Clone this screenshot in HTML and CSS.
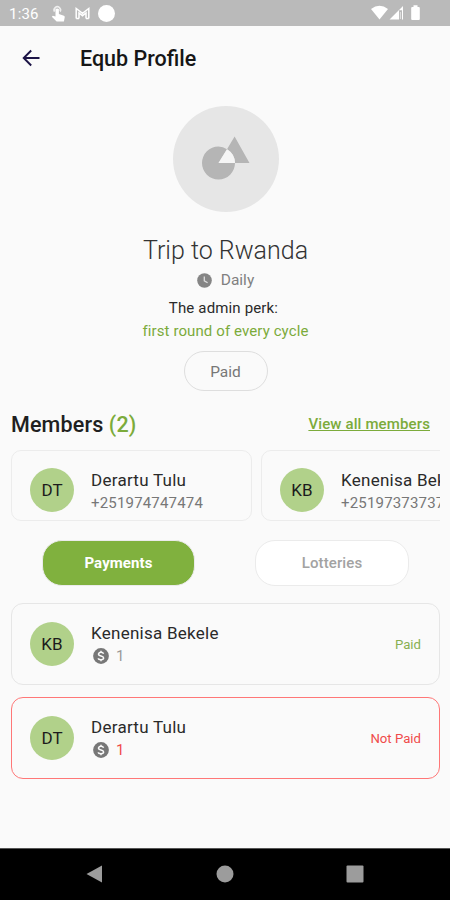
FILE: index.html
```html
<!DOCTYPE html>
<html lang="en">
<head>
<meta charset="utf-8">
<title>Equb Profile</title>
<link rel="stylesheet" href="styles.css">
</head>
<body>
<header class="status">
  <span class="clock">1:36</span>
  <svg class="touch" width="15" height="17" viewBox="0 0 15 17"><path d="M3 7.2A4 4 0 1 1 9.6 7.2L8.300 5.800A2.200 2.200 0 1 0 4.400 5.800Z" opacity=".75"/><path d="M4.500 4.200q1.700-1.600 3.400 0V9l5 1.800q1 .4.800 1.600l-.8 4H5.600L.8 11.700l1-.9 2.700.7z"/></svg>
  <svg class="mail" width="17" height="14" viewBox="0 0 17 14"><path d="M2.200 12.500V2.500L8.500 7.300l6.300-4.800v10M5 12.500V7l3.500 2.700L12 7v5.500M2.200 12.500H5M12 12.500h2.800" fill="none" stroke="#fff" stroke-width="1.500"/></svg>
  <i class="dot"></i>
  <svg class="signals" width="50" height="16" viewBox="0 0 50 16"><path d="M0 4Q8.500-2.500 17 4L8.500 14.500z"/><path d="M18.500 14.500 32 1v13.500h-1V5.200h-3v9.300z"/><path d="M28.900 7h1v7h-1z" opacity=".6"/><path d="M42.500.3h4V2h1.300q1 0 1 1v11q0 1-1 1h-6.600q-1 0-1-1V3q0-1 1-1h1.300z"/></svg>
</header>
<nav class="appbar">
  <svg width="18" height="18" viewBox="0 0 18 18"><path d="M17.500 9H2M9.200 1.500 1.700 9l7.500 7.500" fill="none" stroke="#1c1446" stroke-width="1.900"/></svg>
  <h1>Equb Profile</h1>
</nav>
<main>
  <section class="profile">
    <div class="picture"><svg width="48" height="44" viewBox="0 0 48 44"><path fill="#b5b5b5" fill-rule="evenodd" d="M16.500 10.500a16.500 16.500 0 1 0 16.500 16.500H16.500L25 13.300A16.500 16.500 0 0 0 16.500 10.500ZM32.600.5 47.500 27H33A16.500 16.500 0 0 0 25 13.300Z"/><path fill="#f5f5f5" d="M25 13.300 16.500 27H33A16.500 16.500 0 0 0 25 13.300Z"/></svg></div>
    <h2>Trip to Rwanda</h2>
    <p class="period"><svg width="15" height="15" viewBox="0 0 15 15"><circle cx="7.500" cy="7.500" r="7.300" fill="#858585"/><path d="M7.300 3.500v4.300l3.300 2" fill="none" stroke="#ddd" stroke-width="1.300"/></svg><span>Daily</span></p>
    <p class="perk admin">The admin perk:</p>
    <p class="perk green">first round of every cycle</p>
    <span class="pill">Paid</span>
  </section>
  <div class="heading"><h3>Members <span class="green">(2)</span></h3><a class="green">View all members</a></div>
  <div class="members">
    <article class="member"><span class="avatar">DT</span><div><p class="name">Derartu Tulu</p><p class="phone">+251974747474</p></div></article>
    <article class="member"><span class="avatar">KB</span><div><p class="name">Kenenisa Bekele</p><p class="phone">+251973737373</p></div></article>
  </div>
  <div class="tabs"><span class="tab active">Payments</span><span class="tab">Lotteries</span></div>
  <article class="payment"><span class="avatar">KB</span><div><p class="name">Kenenisa Bekele</p><p class="amount"><svg width="16" height="16" viewBox="0 0 16 16"><circle cx="8" cy="8" r="7.900" fill="#777"/><path d="M10.600 5.700Q10 4.300 8 4.300T5.500 6q0 1.500 2.500 2t2.600 2q0 1.700-2.600 1.700T5.300 10.200M8 2.700v1.600M8 11.700v1.600" fill="none" stroke="#fafafa" stroke-width="1.500"/></svg><span>1</span></p></div><span class="state">Paid</span></article>
  <article class="payment unpaid"><span class="avatar">DT</span><div><p class="name">Derartu Tulu</p><p class="amount"><svg width="16" height="16" viewBox="0 0 16 16"><circle cx="8" cy="8" r="7.900" fill="#777"/><path d="M10.600 5.700Q10 4.300 8 4.300T5.500 6q0 1.500 2.500 2t2.600 2q0 1.700-2.600 1.700T5.300 10.200M8 2.700v1.600M8 11.700v1.600" fill="none" stroke="#fafafa" stroke-width="1.500"/></svg><span>1</span></p></div><span class="state">Not Paid</span></article>
</main>
<footer class="navbar">
  <svg width="17" height="18" viewBox="0 0 17 18"><path d="M16 .5v17L.5 9z"/></svg>
  <svg width="18" height="18" viewBox="0 0 18 18"><circle cx="9" cy="9" r="8.500"/></svg>
  <svg width="18" height="18" viewBox="0 0 18 18"><rect x=".5" y=".5" width="17" height="17" rx="1"/></svg>
</footer>
</body>
</html>
```
FILE: styles.css
```css
* { box-sizing: border-box; margin: 0; padding: 0; }
body { width: 450px; height: 900px; overflow: hidden; display: flex; flex-direction: column; background: #fafafa; color: #2a2a2a; font-family: Roboto, sans-serif; }
svg { display: block; flex: none; }
span, p, h1, h2, h3, a { white-space: nowrap; }
.green { color: #7cab3b; }

.status { height: 26px; background: #bababa; display: flex; align-items: center; padding: 0 29px 0 9px; flex: none; }
.status svg { fill: #fff; }
.clock { color: #fff; font-size: 15px; letter-spacing: .2px; width: 42px; line-height: 26px; padding-top: 2px; }
.mail { margin-left: 8px; }
.dot { width: 17px; height: 17px; border-radius: 50%; background: #fff; margin-left: 7px; }
.signals { margin-left: auto; }

.appbar { height: 64px; display: flex; align-items: center; padding-left: 22px; flex: none; }
.appbar h1 { margin-left: 40px; font-size: 21.500px; font-weight: 500; color: #161616; }

main { flex: 1; }
.profile { display: flex; flex-direction: column; align-items: center; height: 301px; padding: 16px 0 0 1px; }
.picture { width: 106px; height: 106px; border-radius: 50%; background: #e6e6e6; display: flex; align-items: center; justify-content: center; }
.picture svg { margin-top: -3px; }
h2 { margin-top: 23px; font-size: 25px; font-weight: 300; line-height: 32px; color: #333; }
.period { display: flex; align-items: center; gap: 9px; height: 20px; margin-top: 3px; font-size: 15.500px; color: #808080; }
.perk { font-size: 15px; line-height: 23px; letter-spacing: .1px; }
.admin { margin-top: 7px; padding-right: 4px; letter-spacing: .15px; }
.pill { width: 84px; height: 40px; margin-top: 8px; border: 1px solid #dedede; border-radius: 20px; font-size: 15.500px; line-height: 40px; text-align: center; color: #777; }

.heading { height: 59px; display: flex; justify-content: space-between; align-items: center; padding: 8px 20px 0 11px; }
.heading h3 { font-size: 21.500px; font-weight: 500; letter-spacing: .15px; color: #202020; }
.heading a { font-size: 15px; letter-spacing: .13px; text-decoration: underline; font-weight: 500; margin-top: -2px; }
.members { height: 71px; width: 429px; margin-left: 11px; display: flex; gap: 9px; overflow: hidden; }
.member { flex: none; width: 241px; height: 71px; border: 1px solid #ececec; border-radius: 10px; display: flex; align-items: center; padding: 8px 0 0 18px; }
.avatar { width: 44px; height: 44px; flex: none; border-radius: 50%; background: #b1d18a; text-align: center; line-height: 44px; font-size: 17px; color: #1c1c1c; }
.avatar + div { margin-left: 17px; }
.member .avatar + div { padding-top: 4px; }
.name { font-size: 17px; letter-spacing: .26px; line-height: 23px; }
.phone { font-size: 15px; letter-spacing: .18px; line-height: 22px; color: #777; }

.tabs { height: 46px; margin-top: 19px; display: flex; padding: 0 41px 0 42px; justify-content: space-between; }
.tab { width: 154px; height: 46px; border: 1px solid #ebebeb; border-radius: 20px; background: #fff; color: #a2a2a2; text-align: center; font-size: 15px; letter-spacing: .1px; line-height: 45px; font-weight: 500; }
.tab.active { width: 153px; background: #80b13e; color: #fff; font-weight: 700; }

.payment { height: 82px; margin: 17px 10px 0 11px; border: 1px solid #e6e6e6; border-radius: 12px; display: flex; align-items: center; padding: 0 18px; }
.payment + .payment { margin-top: 12px; }
.payment.unpaid { border-color: #f77; }
.amount { display: flex; align-items: center; gap: 7px; height: 22px; padding-left: 2px; font-size: 15px; color: #999; }
.state { margin-left: auto; font-size: 13.200px; color: #88b052; }
.unpaid .state, .unpaid .amount { color: #f04a4a; }

.navbar { height: 52px; background: #000; border-top: 1px solid #555; display: flex; justify-content: space-between; align-items: center; padding: 0 86px 2px; flex: none; }
.navbar svg { fill: #9c9c9c; }
```
